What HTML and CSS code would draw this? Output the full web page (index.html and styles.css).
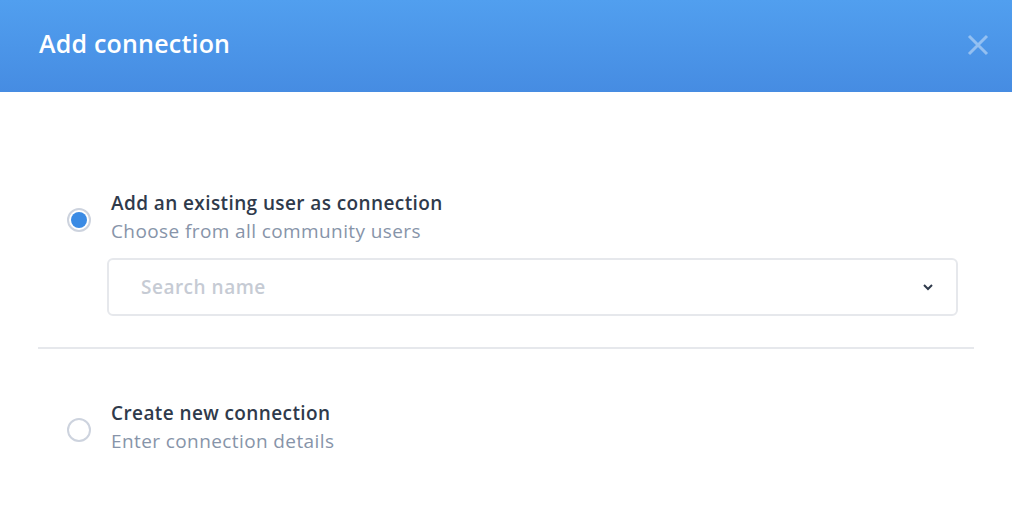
FILE: index.html
```html
<!DOCTYPE html>
<html lang="en">
<head>
  <meta charset="UTF-8" />
  <title>Add connection</title>
  <link rel="stylesheet" href="styles.css">
</head>
<body>
  <div class="modal">
    <div class="modal-header">
      <h2>Add connection</h2>
      <span class="close">
        <svg width="22" height="22" viewBox="0 0 22 22"><path d="M2 2L20 20M20 2L2 20" stroke="currentColor" stroke-width="3"/></svg>
      </span>
    </div>
    <div class="modal-body">
      <div class="option">
        <span class="radio checked"></span>
        <div class="option-text">
          <div class="option-title">Add an existing user as connection</div>
          <div class="option-sub">Choose from all community users</div>
          <div class="select">
            <span class="placeholder">Search name</span>
            <svg width="12" height="8" viewBox="0 0 12 8"><path d="M2 2L6 6L10 2" fill="none" stroke="#2f3a4b" stroke-width="2"/></svg>
          </div>
        </div>
      </div>
      <hr class="divider">
      <div class="option second">
        <span class="radio"></span>
        <div class="option-text">
          <div class="option-title">Create new connection</div>
          <div class="option-sub">Enter connection details</div>
        </div>
      </div>
    </div>
  </div>
</body>
</html>
```
FILE: styles.css
```css
* { box-sizing: border-box; }
body {
  margin: 0;
  font-family: "Open Sans", Lato, sans-serif;
  background: #fff;
  color: #2f3a4b;
}
.modal-header {
  height: 92px;
  background: linear-gradient(to bottom, #519fef, #468ce2);
  display: flex;
  align-items: center;
  justify-content: space-between;
  padding: 0 23px 6px 39px;
}
.modal-header h2 {
  margin: 0;
  color: #fff;
  font-size: 25px;
  font-weight: 600;
  letter-spacing: 0.2px;
}
.close {
  color: rgba(255, 255, 255, 0.4);
  display: flex;
  margin-top: 4px;
}
.modal-body {
  padding: 97px 38px 0 38px;
}
.option {
  display: flex;
  align-items: flex-start;
}
.radio {
  width: 24px;
  height: 24px;
  border-radius: 50%;
  border: 2px solid #cdd3de;
  margin: 19px 20px 0 29px;
  flex-shrink: 0;
  display: flex;
  align-items: center;
  justify-content: center;
}
.radio.checked::after {
  content: "";
  width: 16px;
  height: 16px;
  border-radius: 50%;
  background: #3b8be4;
}
.option-text {
  flex: 1;
}
.option-title {
  font-size: 19px;
  font-weight: 600;
  line-height: 28px;
  letter-spacing: 0.4px;
}
.option-sub {
  font-size: 19px;
  color: #8794a9;
  line-height: 28px;
  letter-spacing: 0.4px;
}
.select {
  margin: 13px 16px 0 -4px;
  height: 58px;
  border: 2px solid #e6e8ec;
  border-radius: 6px;
  display: flex;
  align-items: center;
  justify-content: space-between;
  padding: 0 22px 0 32px;
}
.placeholder {
  font-size: 19px;
  font-weight: 600;
  color: #c6cbd4;
  letter-spacing: 0.5px;
}
.divider {
  border: none;
  border-top: 2px solid #e6e8ec;
  margin: 31px 0 50px 0;
}
```
